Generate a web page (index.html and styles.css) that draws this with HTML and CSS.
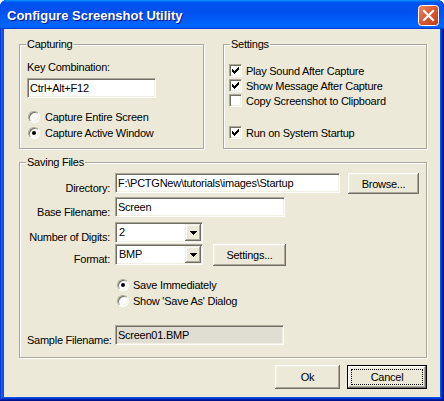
FILE: index.html
```html
<!DOCTYPE html>
<html lang="en">
<head>
  <meta charset="UTF-8">
  <title>Configure Screenshot Utility</title>
  <link rel="stylesheet" href="styles.css">
</head>
<body>
  <div class="window">
    <div class="titlebar">
      <span class="title">Configure Screenshot Utility</span>
      <span class="close">
        <svg width="21" height="21" viewBox="0 0 21 21">
          <defs>
            <linearGradient id="red" x1="0" y1="0" x2="1" y2="1">
              <stop offset="0" stop-color="#ee8a66"/>
              <stop offset="0.45" stop-color="#dc5b33"/>
              <stop offset="1" stop-color="#c03a18"/>
            </linearGradient>
          </defs>
          <rect x="0.5" y="0.5" width="20" height="20" rx="3" fill="url(#red)" stroke="#fff"/>
          <path d="M6 6L15 15M15 6L6 15" stroke="#fff" stroke-width="2.2" stroke-linecap="square"/>
        </svg>
      </span>
    </div>
    <div class="client">
      <div class="top-row">
        <fieldset class="group capturing">
          <legend>Capturing</legend>
          <div class="capturing-body">
            <div class="text-line">Key Combination:</div>
            <input class="edit key" type="text" value="Ctrl+Alt+F12">
            <div class="radio-list">
              <div class="radio-row"><span class="radio"></span>Capture Entire Screen</div>
              <div class="radio-row"><span class="radio on"></span>Capture Active Window</div>
            </div>
          </div>
        </fieldset>
        <fieldset class="group settings">
          <legend>Settings</legend>
          <div class="settings-body">
            <div class="check-row"><span class="check on"></span>Play Sound After Capture</div>
            <div class="check-row"><span class="check on"></span>Show Message After Capture</div>
            <div class="check-row"><span class="check"></span>Copy Screenshot to Clipboard</div>
            <div class="check-row spaced"><span class="check on"></span>Run on System Startup</div>
          </div>
        </fieldset>
      </div>

      <fieldset class="group saving">
        <legend>Saving Files</legend>
        <div class="saving-body">
          <div class="field">
            <span class="field-label">Directory:</span>
            <input class="edit dir" type="text" value="F:\PCTGNew\tutorials\images\Startup">
            <button class="btn browse">Browse...</button>
          </div>
          <div class="field row-base">
            <span class="field-label">Base Filename:</span>
            <input class="edit base" type="text" value="Screen">
          </div>
          <div class="field row-digits">
            <span class="field-label">Number of Digits:</span>
            <div class="combo"><span class="combo-text">2</span><span class="combo-btn"></span></div>
          </div>
          <div class="field row-format">
            <span class="field-label">Format:</span>
            <div class="combo"><span class="combo-text">BMP</span><span class="combo-btn"></span></div>
            <button class="btn settings-btn">Settings...</button>
          </div>
          <div class="save-options">
            <div class="radio-row"><span class="radio on"></span>Save Immediately</div>
            <div class="radio-row"><span class="radio"></span>Show 'Save As' Dialog</div>
          </div>
          <div class="field row-sample">
            <span class="field-label">Sample Filename:</span>
            <input class="edit sample" type="text" value="Screen01.BMP" readonly>
          </div>
        </div>
      </fieldset>

      <div class="actions">
        <button class="btn ok">Ok</button>
        <button class="btn cancel"><span class="focus">Cancel</span></button>
      </div>
    </div>
  </div>
</body>
</html>
```

FILE: styles.css
```css
body {
  margin: 0;
  background: #fff;
  font-family: "Liberation Sans", Arial, sans-serif;
  font-size: 11px;
  letter-spacing: -0.25px;
  color: #000;
}
.window {
  width: 444px;
  height: 401px;
  display: flex;
  flex-direction: column;
  background: #0855dd;
  border-radius: 7px 7px 0 0;
  box-shadow: inset -1px -1px #00138c, inset 1px 1px #0831d9, inset -2px -2px #001ea0, inset 2px 2px #166aee, inset -3px -3px #003bda, inset 3px 3px #0855dd;
}
.titlebar {
  height: 29px;
  flex: none;
  box-sizing: border-box;
  display: flex;
  align-items: center;
  padding: 2px 5px 0 7px;
  border-radius: 7px 7px 0 0;
  background: linear-gradient(180deg, #0997ff, #0053ee 8%, #0050ee 40%, #06f 88%, #06f 93%, #005bff 95%, #003dd7 96%, #003dd7);
}
.title {
  flex: 1;
  color: #fff;
  font-weight: bold;
  font-size: 13px;
  letter-spacing: 0;
  text-shadow: 1px 1px #0f1089;
}
.close {
  width: 21px;
  height: 21px;
  display: block;
}
.close svg {
  display: block;
}
.client {
  flex: 1;
  margin: 0 4px 4px;
  padding: 9px 13px 0 15px;
  background: #ece9d8;
  display: flex;
  flex-direction: column;
}

/* group boxes */
.top-row {
  display: flex;
  gap: 19px;
}
.group {
  margin: 0;
  padding: 0;
  min-width: 0;
  border: 1px solid #aca899;
  box-shadow: inset 1px 1px #fff, 1px 1px #fff;
}
.group legend {
  margin-left: 6px;
  padding: 0 1px;
  line-height: 13px;
  background: #ece9d8;
}
.capturing {
  width: 185px;
  box-sizing: border-box;
}
.settings {
  width: 204px;
  box-sizing: border-box;
}
.capturing-body {
  padding: 10px 7px 7px;
}
.text-line {
  line-height: 13px;
}
.settings-body {
  padding: 12px 4px 8px;
}
.saving {
  margin-top: 7px;
}
.saving-body {
  padding: 4px 7px 12px;
  display: flex;
  flex-direction: column;
}

/* edit boxes */
.edit {
  box-sizing: border-box;
  height: 20px;
  margin: 0;
  padding: 0 2px;
  border: 1px solid;
  border-color: #aca899 #fff #fff #aca899;
  box-shadow: inset 1px 1px #716f64, inset -1px -1px #f1efe2;
  background: #fff;
  font: inherit;
  letter-spacing: inherit;
  color: #000;
  outline: none;
}
.key {
  display: block;
  width: 129px;
  margin-top: 4px;
}
.dir {
  width: 225px;
}
.base {
  width: 170px;
}
.sample {
  width: 169px;
  background: #e0ddd3;
}

/* radios and checks */
.radio-list {
  margin-top: 11px;
}
.radio-row {
  height: 16px;
  display: flex;
  align-items: center;
  gap: 5px;
}
.capturing .radio {
  margin-left: 1px;
}
.radio {
  width: 12px;
  height: 12px;
  flex: none;
  box-sizing: border-box;
  border-radius: 50%;
  border: 1px solid;
  border-color: #aca899 #fff #fff #aca899;
  box-shadow: inset 1px 1px #716f64, inset -1px -1px #f1efe2;
  background: #fff;
  display: flex;
  align-items: center;
  justify-content: center;
}
.radio.on::after {
  content: "";
  width: 4px;
  height: 4px;
  border-radius: 50%;
  background: #000;
}
.check-row {
  height: 15px;
  display: flex;
  align-items: center;
  gap: 4px;
  margin-left: 1px;
}
.check-row.spaced {
  margin-top: 17px;
}
.check {
  width: 13px;
  height: 13px;
  flex: none;
  box-sizing: border-box;
  border: 1px solid;
  border-color: #aca899 #fff #fff #aca899;
  box-shadow: inset 1px 1px #716f64, inset -1px -1px #f1efe2;
  background: #fff no-repeat 2px 2px;
}
.check.on {
  background-image: url("data:image/svg+xml,%3Csvg xmlns='http://www.w3.org/2000/svg' width='7' height='7' shape-rendering='crispEdges'%3E%3Cpath d='M0 2h1v3h-1zM1 3h1v3h-1zM2 4h1v3h-1zM3 3h1v3h-1zM4 2h1v3h-1zM5 1h1v3h-1zM6 0h1v3h-1z'/%3E%3C/svg%3E");
}

/* saving rows */
.field {
  display: flex;
  align-items: flex-start;
}
.field-label {
  width: 83px;
  height: 20px;
  flex: none;
  margin-right: 5px;
  text-align: right;
  white-space: nowrap;
  line-height: 30px;
}
.row-base {
  margin-top: 3px;
}
.row-digits {
  margin-top: 5px;
}
.row-format {
  margin-top: 1px;
}
.save-options {
  margin: 11px 0 0 90px;
}
.save-options .radio-row {
  gap: 4px;
}
.row-sample {
  margin-top: 16px;
}
.combo {
  width: 88px;
  height: 21px;
  box-sizing: border-box;
  padding: 1px;
  display: flex;
  border: 1px solid;
  border-color: #aca899 #fff #fff #aca899;
  box-shadow: inset 1px 1px #716f64, inset -1px -1px #f1efe2;
  background: #fff;
}
.combo-text {
  flex: 1;
  padding-left: 2px;
  line-height: 17px;
}
.combo-btn {
  width: 16px;
  flex: none;
  background: #ece9d8 no-repeat center;
  background-image: url("data:image/svg+xml,%3Csvg xmlns='http://www.w3.org/2000/svg' width='7' height='4' shape-rendering='crispEdges'%3E%3Cpath d='M0 0h7v1h-1v1h-1v1h-1v1h-1v-1h-1v-1h-1v-1h-1z'/%3E%3C/svg%3E");
  box-shadow: inset -1px -1px #716f64, inset 1px 1px #f1efe2, inset -2px -2px #aca899, inset 2px 2px #fff;
}

/* push buttons */
.btn {
  box-sizing: border-box;
  margin: 0;
  padding: 0;
  border: none;
  background: #ece9d8;
  font: inherit;
  letter-spacing: inherit;
  color: #000;
  box-shadow: inset -1px -1px #716f64, inset 1px 1px #fff, inset -2px -2px #aca899, inset 2px 2px #f1efe2;
}
.browse {
  width: 71px;
  height: 21px;
  margin-left: 8px;
}
.settings-btn {
  width: 73px;
  height: 22px;
  margin-left: 10px;
}
.actions {
  margin-top: 7px;
  display: flex;
  justify-content: flex-end;
  gap: 7px;
}
.ok {
  width: 65px;
  height: 24px;
}
.cancel {
  width: 80px;
  height: 24px;
  padding: 4px;
  display: flex;
  box-shadow: inset 0 0 0 1px #000, inset -2px -2px #716f64, inset 2px 2px #fff, inset -3px -3px #aca899, inset 3px 3px #f1efe2;
}
.focus {
  flex: 1;
  border: 1px dotted #000;
  display: flex;
  align-items: center;
  justify-content: center;
}
```
